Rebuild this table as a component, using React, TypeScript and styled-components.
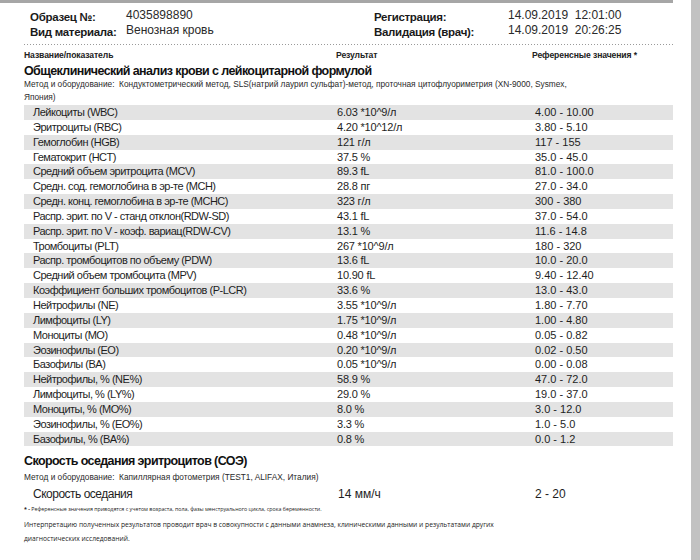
import React from "react";
import styled, { createGlobalStyle } from "styled-components";

const GlobalStyle = createGlobalStyle`
  html, body {
    margin: 0;
    padding: 0;
    background: #ffffff;
  }
  body {
    font-family: "Liberation Sans", Arial, sans-serif;
    color: #1c1c1c;
  }
`;

type Row = { name: string; value: string; range: string };

const cbc: Row[] = [
  { name: "Лейкоциты (WBC)", value: "6.03 *10^9/л", range: "4.00 - 10.00" },
  { name: "Эритроциты (RBC)", value: "4.20 *10^12/л", range: "3.80 - 5.10" },
  { name: "Гемоглобин (HGB)", value: "121 г/л", range: "117 - 155" },
  { name: "Гематокрит (HCT)", value: "37.5 %", range: "35.0 - 45.0" },
  { name: "Средний объем эритроцита (MCV)", value: "89.3 fL", range: "81.0 - 100.0" },
  { name: "Средн. сод. гемоглобина в эр-те (MCH)", value: "28.8 пг", range: "27.0 - 34.0" },
  { name: "Средн. конц. гемоглобина в эр-те (MCHC)", value: "323 г/л", range: "300 - 380" },
  { name: "Распр. эрит. по V - станд отклон(RDW-SD)", value: "43.1 fL", range: "37.0 - 54.0" },
  { name: "Распр. эрит. по V - коэф. вариац(RDW-CV)", value: "13.1 %", range: "11.6 - 14.8" },
  { name: "Тромбоциты (PLT)", value: "267 *10^9/л", range: "180 - 320" },
  { name: "Распр. тромбоцитов по объему (PDW)", value: "13.6 fL", range: "10.0 - 20.0" },
  { name: "Средний объем тромбоцита (MPV)", value: "10.90 fL", range: "9.40 - 12.40" },
  { name: "Коэффициент больших тромбоцитов (P-LCR)", value: "33.6 %", range: "13.0 - 43.0" },
  { name: "Нейтрофилы (NE)", value: "3.55 *10^9/л", range: "1.80 - 7.70" },
  { name: "Лимфоциты (LY)", value: "1.75 *10^9/л", range: "1.00 - 4.80" },
  { name: "Моноциты (MO)", value: "0.48 *10^9/л", range: "0.05 - 0.82" },
  { name: "Эозинофилы (EO)", value: "0.20 *10^9/л", range: "0.02 - 0.50" },
  { name: "Базофилы (BA)", value: "0.05 *10^9/л", range: "0.00 - 0.08" },
  { name: "Нейтрофилы, % (NE%)", value: "58.9 %", range: "47.0 - 72.0" },
  { name: "Лимфоциты, % (LY%)", value: "29.0 %", range: "19.0 - 37.0" },
  { name: "Моноциты, % (MO%)", value: "8.0 %", range: "3.0 - 12.0" },
  { name: "Эозинофилы, % (EO%)", value: "3.3 %", range: "1.0 - 5.0" },
  { name: "Базофилы, % (BA%)", value: "0.8 %", range: "0.0 - 1.2" },
];

const Page = styled.div`
  width: 700px;
  height: 560px;
  display: flex;
  overflow: hidden;
`;

const Sheet = styled.div`
  width: 691px;
  display: flex;
  flex-direction: column;
`;

const ScrollStrip = styled.div`
  width: 9px;
  background: #c2c2c2;
`;

const TopBar = styled.div`
  width: 673px;
  height: 3px;
  background: #a6a6a6;
`;

const Content = styled.div`
  padding: 7px 18px 0 24px;
`;

const InfoGrid = styled.div`
  display: grid;
  grid-template-columns: 96px 248px 134px auto;
  padding-left: 6px;
  line-height: 15px;
`;

const InfoLabel = styled.div`
  font-size: 11.5px;
  font-weight: bold;
  letter-spacing: -0.3px;
  color: #1a1a1a;
`;

const InfoValue = styled.div`
  font-size: 12px;
  color: #2a2a2a;
  margin-top: -2px;
  white-space: pre;
`;

const Dots = styled.div`
  height: 1px;
  margin-top: 4px;
  background: repeating-linear-gradient(to right, #9a9a9a 0 1px, transparent 1px 3px);
`;

const ColumnsHead = styled.div`
  display: grid;
  grid-template-columns: 312px 196px auto;
  font-size: 8.6px;
  font-weight: bold;
  letter-spacing: -0.1px;
  line-height: 11px;
  margin-top: 5px;
  color: #222;
`;

const SectionTitle = styled.div<{ $gap: number }>`
  font-size: 12.5px;
  font-weight: bold;
  letter-spacing: -0.6px;
  line-height: 14px;
  margin-top: ${({ $gap }) => $gap}px;
  color: #111;
`;

const Method = styled.div<{ $gap: number }>`
  font-size: 8.3px;
  line-height: 13px;
  margin-top: ${({ $gap }) => $gap}px;
  color: #2a2a2a;
`;

const Table = styled.div`
  margin-top: 1px;
`;

const TableRow = styled.div<{ $striped: boolean }>`
  display: grid;
  grid-template-columns: 304px 198px auto;
  padding-left: 9px;
  height: 14.85px;
  line-height: 14.85px;
  font-size: 11px;
  background: ${({ $striped }) => ($striped ? "#e3e3e3" : "transparent")};
  color: #1e1e1e;
  white-space: nowrap;
`;

const Name = styled.span`
  letter-spacing: -0.5px;
`;

const Value = styled.span`
  letter-spacing: -0.2px;
`;

const EsrRow = styled.div`
  display: grid;
  grid-template-columns: 305px 197px auto;
  padding-left: 9px;
  font-size: 12px;
  line-height: 16px;
  margin-top: 2px;
  color: #1e1e1e;
`;

const Note = styled.div<{ $gap: number; $size: number; $lh: number }>`
  font-family: "Open Sans", "Noto Sans", sans-serif;
  font-size: ${({ $size }) => $size}px;
  line-height: ${({ $lh }) => $lh}px;
  margin-top: ${({ $gap }) => $gap}px;
  color: #222;
  max-width: 480px;

  b {
    font-weight: bold;
  }
`;

export default function App() {
  return (
    <Page>
      <GlobalStyle />
      <Sheet>
        <TopBar />
        <Content>
          <InfoGrid>
            <InfoLabel>Образец №:</InfoLabel>
            <InfoValue>4035898890</InfoValue>
            <InfoLabel>Регистрация:</InfoLabel>
            <InfoValue>{"14.09.2019  12:01:00"}</InfoValue>
            <InfoLabel>Вид материала:</InfoLabel>
            <InfoValue>Венозная кровь</InfoValue>
            <InfoLabel>Валидация (врач):</InfoLabel>
            <InfoValue>{"14.09.2019  20:26:25"}</InfoValue>
          </InfoGrid>
          <Dots />
          <ColumnsHead>
            <span>Название/показатель</span>
            <span>Результат</span>
            <span>Референсные значения *</span>
          </ColumnsHead>
          <SectionTitle $gap={3}>Общеклинический анализ крови с лейкоцитарной формулой</SectionTitle>
          <Method $gap={0}>
            Метод и оборудование:&nbsp; Кондуктометрический метод, SLS(натрий лаурил сульфат)-метод,
            проточная цитофлуориметрия (XN-9000, Sysmex,
            <br />
            Япония)
          </Method>
          <Table>
            {cbc.map((r, i) => (
              <TableRow key={r.name} $striped={i % 2 === 0}>
                <Name>{r.name}</Name>
                <Value>{r.value}</Value>
                <span>{r.range}</span>
              </TableRow>
            ))}
          </Table>
          <SectionTitle $gap={8}>Скорость оседания эритроцитов (СОЭ)</SectionTitle>
          <Method $gap={3}>Метод и оборудование:&nbsp; Капиллярная фотометрия (TEST1, ALIFAX, Италия)</Method>
          <EsrRow>
            <Name>Скорость оседания</Name>
            <span>14 мм/ч</span>
            <span>2 - 20</span>
          </EsrRow>
          <Note $gap={1} $size={5.3} $lh={12}>
            <b>* -</b> Референсные значения приводятся с учетом возраста, пола, фазы менструального
            цикла, срока беременности.
          </Note>
          <Note $gap={3} $size={6.7} $lh={14}>
            Интерпретацию полученных результатов проводит врач в совокупности с данными анамнеза,
            клиническими данными и результатами других диагностических исследований.
          </Note>
        </Content>
      </Sheet>
      <ScrollStrip />
    </Page>
  );
}
